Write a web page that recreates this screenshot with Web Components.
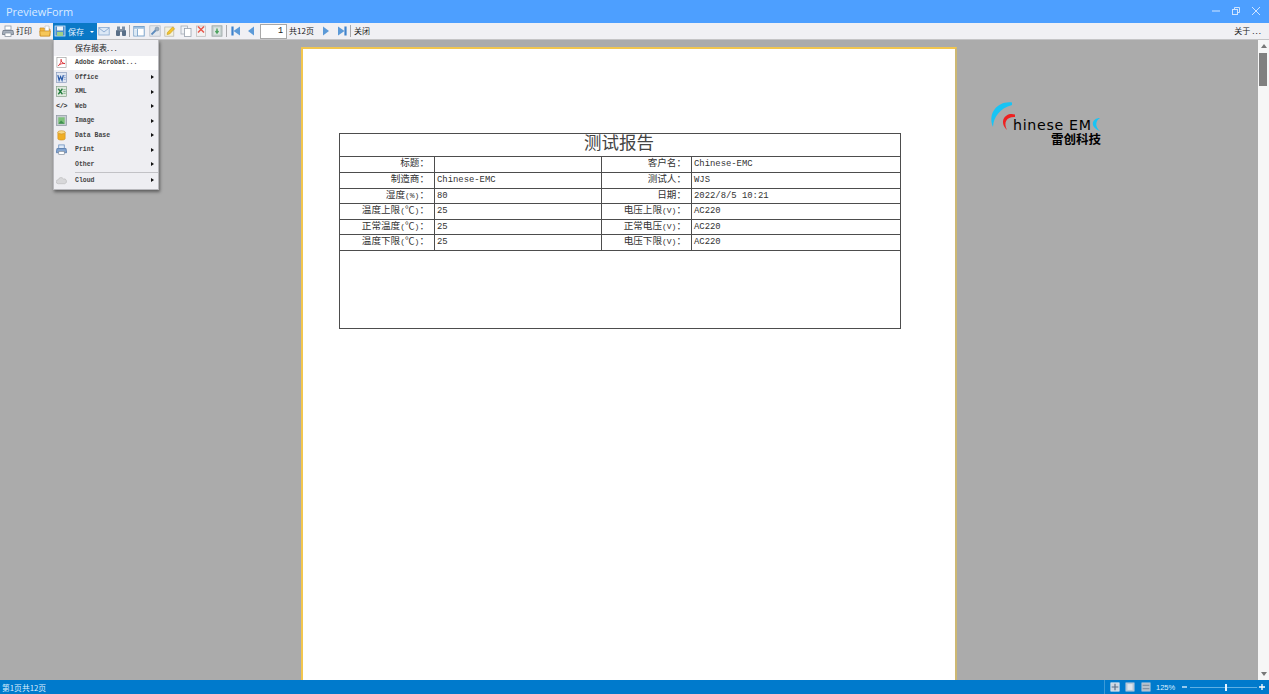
<!DOCTYPE html>
<html lang="zh"><head><meta charset="utf-8"><title>PreviewForm</title>
<style>
html,body{margin:0;height:694px;overflow:hidden;background:#ababab}
body{display:flex;flex-direction:column;font-family:"Noto Sans CJK SC","Liberation Sans",sans-serif;position:relative}
.m{font:8px "Liberation Mono",monospace}
.d{letter-spacing:1px}
.d2{letter-spacing:1.5px}
</style></head><body>
<x-titlebar>PreviewForm</x-titlebar>
<x-toolbar>
  <x-tool icon="print" ml="2">打印</x-tool>
  <x-tool icon="folder" ml="7"></x-tool>
  <x-savebtn>保存</x-savebtn>
  <x-tool icon="mail" ml="1"></x-tool>
  <x-tool icon="binoc" ml="5"></x-tool>
  <x-sep ml="2"></x-sep>
  <x-tool icon="window" ml="3"></x-tool>
  <x-tool icon="tool" ml="4"></x-tool>
  <x-tool icon="edit" ml="3"></x-tool>
  <x-tool icon="copy" ml="4"></x-tool>
  <x-tool icon="del" ml="3"></x-tool>
  <x-tool icon="export" ml="4"></x-tool>
  <x-sep ml="3"></x-sep>
  <x-tool icon="first" ml="3"></x-tool>
  <x-tool icon="prev" ml="3"></x-tool>
  <x-pageinput ml="3">1</x-pageinput>
  <x-tool ml="2">共12页</x-tool>
  <x-tool icon="next" ml="6"></x-tool>
  <x-tool icon="last" ml="4"></x-tool>
  <x-sep ml="2"></x-sep>
  <x-tool ml="3">关闭</x-tool>
  <x-tool slot="end">关于<span class="d">...</span></x-tool>
</x-toolbar>
<x-main>
  <x-page>
    <x-report>
      <x-cell slot="title" title-cell>测试报告</x-cell>
      <x-cell label>标题：</x-cell><x-cell></x-cell><x-cell label>客户名：</x-cell><x-cell>Chinese-EMC</x-cell>
      <x-cell label>制造商：</x-cell><x-cell>Chinese-EMC</x-cell><x-cell label>测试人：</x-cell><x-cell>WJS</x-cell>
      <x-cell label>湿度<span class="m">(%)</span>：</x-cell><x-cell>80</x-cell><x-cell label>日期：</x-cell><x-cell>2022/8/5 10:21</x-cell>
      <x-cell label>温度上限<span class="m">(</span>℃<span class="m">)</span>：</x-cell><x-cell>25</x-cell><x-cell label>电压上限<span class="m">(V)</span>：</x-cell><x-cell>AC220</x-cell>
      <x-cell label>正常温度<span class="m">(</span>℃<span class="m">)</span>：</x-cell><x-cell>25</x-cell><x-cell label>正常电压<span class="m">(V)</span>：</x-cell><x-cell>AC220</x-cell>
      <x-cell label>温度下限<span class="m">(</span>℃<span class="m">)</span>：</x-cell><x-cell>25</x-cell><x-cell label>电压下限<span class="m">(V)</span>：</x-cell><x-cell>AC220</x-cell>
    </x-report>
  </x-page>
  <x-logo></x-logo>
</x-main>
<x-statusbar>第1页共12页</x-statusbar>
<x-menu>
  <x-item>保存报表<span class="d2">...</span></x-item>
  <x-item hot icon="pdf">Adobe Acrobat...</x-item>
  <x-item icon="word" sub>Office</x-item>
  <x-item icon="excel" sub>XML</x-item>
  <x-item icon="web" sub>Web</x-item>
  <x-item icon="image" sub>Image</x-item>
  <x-item icon="db" sub>Data Base</x-item>
  <x-item icon="mprint" sub>Print</x-item>
  <x-item sub>Other</x-item>
  <x-menusep></x-menusep>
  <x-item icon="cloud" sub tall>Cloud</x-item>
</x-menu>
<script>
const ICONS={
print:'<rect x="3" y="1" width="6" height="4" fill="#fff" stroke="#8a96a6" stroke-width=".8"/><path d="M1 5.500h10l.6 4H.4z" fill="#a9b2bf" stroke="#6d7785" stroke-width=".8"/><rect x="3" y="8" width="6" height="3.500" fill="#fff" stroke="#7f8997" stroke-width=".7"/>',
mprint:'<rect x="3" y="1" width="6" height="4" fill="#dfeaf7" stroke="#5f86b8" stroke-width=".8"/><path d="M1 5h10l.6 4.500H.4z" fill="#84a6d2" stroke="#4f74a6" stroke-width=".8"/><rect x="3" y="8" width="6" height="3.500" fill="#fff" stroke="#7f8997" stroke-width=".7"/>',
folder:'<path d="M1 3h4l1 1h5v7H1z" fill="#f2b53d" stroke="#c98a1e" stroke-width=".7"/><path d="M6 1h4v5H6z" fill="#fff" stroke="#b9b9b9" stroke-width=".6"/><path d="M.8 6h10.600l-1 5H1.400z" fill="#f6c75a" stroke="#c98a1e" stroke-width=".6"/>',
save:'<rect x="1" y="1" width="10" height="10" fill="#4f8fcf" stroke="#d6e8f7" stroke-width=".8"/><rect x="3" y="1.500" width="6" height="4" fill="#f2f6fa"/><rect x="3" y="7" width="6" height="4" fill="#9fd089"/>',
mail:'<rect x=".8" y="2.500" width="10.400" height="7.500" fill="#dce8f6" stroke="#88a8d0" stroke-width=".8"/><path d="M1 3l5 4 5-4" fill="none" stroke="#7d9fca" stroke-width=".8"/>',
binoc:'<rect x="1" y="5" width="4" height="6" rx="1" fill="#5a6f88"/><rect x="7" y="5" width="4" height="6" rx="1" fill="#5a6f88"/><rect x="2" y="1.500" width="3" height="4" fill="#7b8da2"/><rect x="7" y="1.500" width="3" height="4" fill="#7b8da2"/><rect x="5" y="4" width="2" height="3" fill="#8492a3"/>',
window:'<rect x=".8" y="1.500" width="10.400" height="9.500" fill="#fff" stroke="#6f9bc6" stroke-width=".9"/><rect x="1" y="2" width="10" height="1.800" fill="#9dc0e0"/><path d="M4.500 4v7" stroke="#6f9bc6" stroke-width=".8"/><rect x="1.500" y="4.500" width="2.500" height="6" fill="#dbe9f6"/>',
tool:'<rect x=".8" y=".8" width="10.400" height="10.400" fill="#e3e7ec" stroke="#b4bac3" stroke-width=".7"/><path d="M2.500 9.500L7 5" stroke="#5d8cbe" stroke-width="1.800"/><circle cx="8" cy="4" r="2" fill="#9cb0c5" stroke="#74879b" stroke-width=".5"/>',
edit:'<rect x=".8" y="2" width="9" height="9.200" fill="#f4f1df" stroke="#b5b5ac" stroke-width=".7"/><path d="M3 9.500l.6-2.200 5-5.300 2 1.800-5 5.200z" fill="#f4c430" stroke="#c49a1e" stroke-width=".6"/>',
copy:'<rect x="1" y="1" width="6.500" height="8" fill="#eef1f5" stroke="#a5adb7" stroke-width=".8"/><rect x="4.500" y="3.500" width="6.500" height="8" fill="#fff" stroke="#98a1ad" stroke-width=".8"/>',
del:'<rect x="1.500" y="1" width="9" height="10.300" fill="#f2f2f2" stroke="#b8b8b8" stroke-width=".7"/><path d="M3 1.500l6 6M9 1.500l-6 6" stroke="#e8574c" stroke-width="1.500"/>',
export:'<rect x="1" y=".8" width="10" height="10.400" fill="#c9d4d2" stroke="#9aa4a4" stroke-width=".8"/><rect x="3" y="2.500" width="6" height="7" fill="#dfe6e4"/><path d="M6 3.500v4M4.500 6L6 8l1.500-2" stroke="#4da35f" stroke-width="1.400" fill="#4da35f"/>',
first:'<path d="M2.500 1.500v9" stroke="#3f83cc" stroke-width="2.200"/><path d="M10 1.500v9L3.500 6z" fill="#5c9ad8"/>',
prev:'<path d="M9 1.500v9L3 6z" fill="#5c9ad8"/>',
next:'<path d="M3 1.500v9L9 6z" fill="#5c9ad8"/>',
last:'<path d="M9.500 1.500v9" stroke="#3f83cc" stroke-width="2.200"/><path d="M2 1.500v9L8.500 6z" fill="#5c9ad8"/>',
pdf:'<rect x="1" y=".5" width="10" height="11" fill="#fff" stroke="#9a9a9a" stroke-width=".7"/><path d="M2.500 9.500C5 7.500 6 4.500 5.600 2.500 5 4.500 7 7 9.800 7.200 7 6.800 4.500 7.500 2.500 9.500z" fill="none" stroke="#d8262c" stroke-width=".9"/>',
word:'<rect x=".5" y=".5" width="11" height="11" fill="#dfe6f2" stroke="#8396b8" stroke-width=".7"/><path d="M2 3.500l1.400 5.500L5 5l1.600 4L8 3.500" fill="none" stroke="#2a5aa8" stroke-width="1.300"/><path d="M8.500 4h2M8.500 6h2M8.500 8h2" stroke="#6d8fc6" stroke-width=".7"/>',
excel:'<rect x=".5" y=".5" width="11" height="11" fill="#dfe9de" stroke="#7d9b80" stroke-width=".7"/><path d="M2.500 3l4.500 6M7 3L2.500 9" stroke="#1f7a3a" stroke-width="1.400"/><path d="M8 4h2.500M8 6h2.500M8 8h2.500" stroke="#4c9960" stroke-width=".7"/>',
image:'<rect x=".5" y=".5" width="11" height="11" fill="#c6ccd2" stroke="#8f98a2" stroke-width=".8"/><rect x="2.500" y="2.500" width="7" height="7" fill="#7cc07a"/><path d="M2.500 9.500L5.500 6l4 3.500z" fill="#3f8f4f"/>',
db:'<path d="M2 2.500v7c0 2 8 2 8 0v-7z" fill="#f0ae24" stroke="#c98a1e" stroke-width=".6"/><ellipse cx="6" cy="2.500" rx="4" ry="1.800" fill="#f7d987" stroke="#c98a1e" stroke-width=".6"/>',
cloud:'<path d="M2.500 9.500a2.200 2.200 0 0 1 0-4.400A3 3 0 0 1 8 4.300a2.700 2.700 0 0 1 1.500 5.200z" fill="#d8d8da" stroke="#b8b8ba" stroke-width=".7"/>',
fit:'<rect x="1" y="1" width="10" height="10" fill="#cdd7e2" stroke="#e8eef4" stroke-width=".8"/><path d="M2 6h8M6 2v8" stroke="#5a6f88" stroke-width="1.400"/>',
one:'<rect x="1" y="1" width="10" height="10" fill="#b9c9d8" stroke="#a8c2dc" stroke-width=".8"/><rect x="3" y="2.500" width="6" height="7" fill="#dde5ed"/>',
multi:'<rect x="1" y="1" width="10" height="10" fill="#b9c2cc" stroke="#a8c2dc" stroke-width=".8"/><path d="M2 4h8M2 8h8" stroke="#8494a5" stroke-width="1.400"/>'
};
function def(name,css,html,init){
  customElements.define(name,class extends HTMLElement{
    connectedCallback(){
      if(this.shadowRoot)return;
      const s=this.attachShadow({mode:'open'});
      s.innerHTML='<style>'+css+'</style>'+(typeof html==='function'?html(this):html);
      if(this.hasAttribute('ml'))this.style.marginLeft=this.getAttribute('ml')+'px';
      if(init)init(this,s);
    }
  });
}
const svg=(n,size=12)=>'<svg width="'+size+'" height="'+size+'" viewBox="0 0 12 12">'+(ICONS[n]||'')+'</svg>';
const UI='"Noto Sans CJK SC","Liberation Sans",sans-serif';

def('x-titlebar',
 ':host{display:flex;align-items:center;justify-content:space-between;height:23px;flex:none;background:#4d9fff;color:#d9ebff;font:11px "Open Sans",sans-serif;padding:0 9px 1px 6px;box-sizing:border-box}svg{display:block}.c{display:flex;gap:12px}',
 '<slot></slot><div class="c"><svg width="8" height="8" viewBox="0 0 8 8"><path d="M0 4h8" stroke="#cfe4ff"/></svg><svg width="8" height="8" viewBox="0 0 8 8" fill="none" stroke="#cfe4ff"><rect x=".5" y="2.500" width="5" height="5"/><path d="M2.500 2.500v-2h5v5h-2"/></svg><svg width="8" height="8" viewBox="0 0 8 8"><path d="M0 0l8 8M8 0l-8 8" stroke="#cfe4ff"/></svg></div>');

def('x-toolbar',
 ':host{display:flex;align-items:center;justify-content:space-between;height:17px;flex:none;background:#f0f0f4;box-sizing:border-box;border-bottom:1px solid #c4c4c6;font:8px '+UI+';color:#222;padding-right:7px}.l{display:flex;align-items:center;height:100%}',
 '<div class="l"><slot></slot></div><slot name="end"></slot>');

def('x-tool',
 ':host{display:inline-flex;align-items:center;gap:2px;height:16px;white-space:nowrap;line-height:16px}svg{display:block}',
 t=>(t.hasAttribute('icon')?svg(t.getAttribute('icon')):'')+'<slot></slot>');

def('x-sep',':host{display:block;width:1px;height:12px;background:#a9a9ad}','');

def('x-savebtn',
 ':host{display:flex;align-items:center;width:44px;height:17px;margin-left:2px;background:#0a78c6;color:#e6f3ff;box-sizing:border-box;padding-left:1px;gap:2px;position:relative}svg{display:block}.a{position:absolute;right:3px;top:8px;border:2px solid transparent;border-top:2px solid #fff;border-bottom:0}',
 svg('save')+'<slot></slot><i class="a"></i>');

def('x-pageinput',
 ':host{display:block;width:27px;height:15px;box-sizing:border-box;background:#fff;border:1px solid #a8a8a8;text-align:right;padding-right:3px;font:8.5px/13px "Liberation Mono",monospace;color:#222}',
 '<slot></slot>');

def('x-main',
 ':host{display:flex;flex:1;min-height:0;background:#ababab;overflow:hidden}.w{flex:1;display:flex;align-items:flex-start;padding:7px 0 0 301px;min-width:0;overflow:hidden}.s{width:11px;background:#f6f6f6;display:flex;flex-direction:column;align-items:center;justify-content:space-between;padding:4px 0;box-sizing:border-box;position:relative}.t{position:absolute;top:13px;left:1px;width:8px;height:33px;background:#808080}.u,.d{border:3px solid transparent}.u{border-bottom:4px solid #777;border-top:0}.d{border-top:4px solid #777;border-bottom:0}',
 '<div class="w"><slot></slot></div><div class="s"><i class="u"></i><i class="t"></i><i class="d"></i></div>');

def('x-page',
 ':host{display:block;flex:none;width:656px;height:640px;box-sizing:border-box;background:#fff;border:solid #f2c64e;border-width:2px 2px 0 2px;border-right-color:#cdb873;padding:84px 0 0 36px}',
 '<slot></slot>');

def('x-report',
 ':host{display:grid;width:562px;box-sizing:border-box;grid-template-columns:94px 166px 89px 208px;grid-template-rows:22px 15px 15px 14px 15px 14px 15px 77px;gap:1px;background:#4d4d4d;border:1px solid #4d4d4d}.t{display:contents}.e{grid-column:1/-1;background:#fff}',
 '<div class="t"><slot name="title"></slot></div><slot></slot><div class="e"></div>');

def('x-cell',
 ':host{display:block;background:#fff;color:#333;font:8.9px/15.5px "Liberation Mono","Noto Sans CJK SC",monospace;padding-left:2px;white-space:nowrap}:host([label]){font:9.6px/11px '+UI+';text-align:right;padding:0 5px 0 0;color:#333}:host([title-cell]){grid-column:1/-1;font:17.5px/15px '+UI+';text-align:center;padding:0 2px 0 0;color:#444}',
 '<slot></slot>');

def('x-logo',
 ':host{display:block;flex:none;margin:53px 0 0 33px;width:112px;height:48px}svg{display:block;overflow:visible}',
 '<svg width="112" height="48" viewBox="0 0 112 48"><path d="M22 2.500C9 .5-3 12 3 27 3.500 17 10 8 22 5z" fill="#18c4f4"/><path d="M25 14.500C16 11.500 8 21 17 30 13 22 17 16.500 25 17z" fill="#ee2020"/><path d="M110 18C102 18 99 27 110 31 105 27 105 21 110 18z" fill="#18c4f4"/><text x="23" y="30" font-family="DejaVu Sans" font-size="14.2" fill="#000" textLength="78">hinese EM</text><text x="61" y="44" font-family="Noto Sans CJK SC" font-size="12.5" font-weight="700" fill="#000">雷创科技</text></svg>');

def('x-statusbar',
 ':host{display:flex;align-items:center;justify-content:space-between;height:14px;flex:none;background:#007acc;color:#dcefff;font:7.8px '+UI+';padding:0 4px 0 2px;box-sizing:border-box}.r{display:flex;align-items:center;height:100%;font:7.5px "Liberation Sans",sans-serif}svg{display:block}.v{width:1px;height:14px;background:#3b9ad8;margin-right:5px}.l{position:relative;width:67px;height:1px;background:#5fb0e4;margin:0 2px 0 2px}.k{position:absolute;left:35px;top:-3px;width:2px;height:7px;background:#e8f4ff}',
 '<slot></slot><div class="r"><i class="v"></i>'+svg('fit',10)+'<span style="width:5px"></span>'+svg('one',10)+'<span style="width:6px"></span>'+svg('multi',10)+'<span style="margin-left:5px;width:26px">125%</span><svg width="6" height="6" viewBox="0 0 6 6"><path d="M0 3h5" stroke="#e8f4ff" stroke-width="1.300"/></svg><div class="l"><i class="k"></i></div><svg width="6" height="6" viewBox="0 0 6 6"><path d="M0 3h6M3 0v6" stroke="#fff" stroke-width="1.300"/></svg></div>');

def('x-menu',
 ':host{position:absolute;left:53px;top:40px;width:106px;box-sizing:border-box;background:#eeeef2;border:1px solid #b8b8bc;border-top:0;box-shadow:1px 2px 3px rgba(0,0,0,.45);padding:1px 0 1px;display:block}',
 '<slot></slot>');

def('x-item',
 ':host{display:flex;align-items:center;box-sizing:border-box;height:14.5px;color:#444;font:700 6.5px "Liberation Mono","Noto Sans CJK SC",monospace;position:relative;white-space:nowrap}:host([hot]){background:#fff}:host([tall]){height:15px}:host(:not([icon]):not([sub])){padding-bottom:2px}.i{width:13px;margin:0 7px 0 1px;display:flex;justify-content:center}svg{display:block}.a{position:absolute;left:97px;top:5px;border:2.500px solid transparent;border-left:3px solid #111;border-right:0}:host(:not([icon]):not([sub])) slot{font:400 8px '+UI+';color:#222}',
 t=>{const n=t.getAttribute('icon');
   const ic=n==='web'?'<span style="font:700 7px Liberation Mono,monospace;color:#333;letter-spacing:-.6px">&lt;/&gt;</span>':(n?svg(n,11):'');
   return '<span class="i">'+ic+'</span><slot></slot>'+(t.hasAttribute('sub')?'<i class="a"></i>':'');});

def('x-menusep',':host{display:block;height:1px;background:#c2c2c6;margin:0 0 0 21px}','');
</script>
</body></html>
